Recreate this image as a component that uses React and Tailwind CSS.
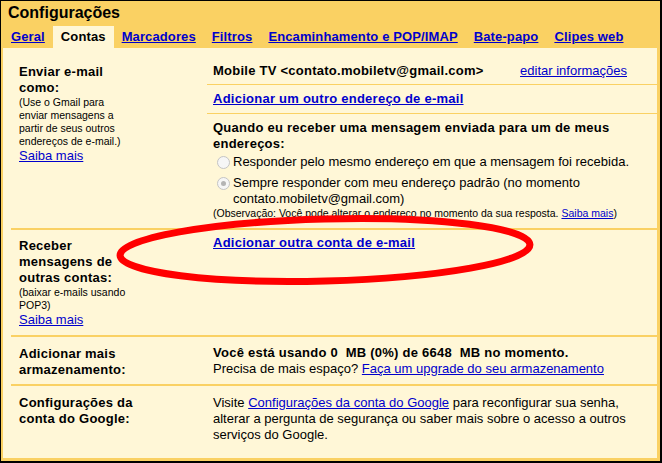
import React from "react";

const LINK = "text-[#0000cc] underline";
const BOLD = "font-bold tracking-[0.25px]";
const SMALL = "text-[10.5px] leading-[13px]";

const TABS = [
  { name: "Geral" },
  { name: "Contas", active: true },
  { name: "Marcadores" },
  { name: "Filtros" },
  { name: "Encaminhamento e POP/IMAP" },
  { name: "Bate-papo" },
  { name: "Clipes web" },
];

function Radio({ checked }) {
  return (
    <span className="mt-[2px] mr-[3px] flex h-[13px] w-[13px] shrink-0 items-center justify-center rounded-full border border-[#c4c4c4] bg-[#f6f6f6]">
      {checked && <span className="h-[5px] w-[5px] rounded-full bg-[#b4b4b4]"></span>}
    </span>
  );
}

export default function App() {
  return (
    <div className="relative h-[463px] w-[662px] bg-black pb-[2px] pl-px pr-[2px] pt-px font-[Liberation_Sans,Arial,sans-serif] text-[13px] leading-4 text-black">
      <div className="flex h-full flex-col bg-[#fad163] pb-[3px] pl-[2px] pr-[3px]">
        <div className="pl-[5px] pt-[2px] text-[16px] font-bold leading-5">Configurações</div>

        <div className="mt-[3px] flex h-[22px] font-bold leading-[22px] tracking-[0.12px]">
          {TABS.map((tab) => (
            <span
              key={tab.name}
              className={tab.active ? "bg-[#fff7d7] px-2" : `px-2 ${LINK}`}
            >
              {tab.name}
            </span>
          ))}
        </div>

        <div className="flex-1 bg-[#fff7d7] pl-2 pt-2">
          {/* Enviar e-mail como */}
          <div className="flex border-b-2 border-[#fad163]">
            <div className="w-[196px] shrink-0 pl-2 pt-2">
              <div className={BOLD}>
                Enviar e-mail
                <br />
                como:
              </div>
              <div className={SMALL}>
                (Use o Gmail para
                <br />
                enviar mensagens a
                <br />
                partir de seus outros
                <br />
                endereços de e-mail.)
              </div>
              <a className={LINK}>Saiba mais</a>
            </div>
            <div className="flex-1">
              <div className="flex justify-between border-b border-[#fad163] pb-[5px] pl-[6px] pr-[30px] pt-[7px]">
                <span className={BOLD}>Mobile TV &lt;contato.mobiletv@gmail.com&gt;</span>
                <a className={LINK}>editar informações</a>
              </div>
              <div className="border-b border-[#fad163] pb-[6px] pl-[6px] pt-[6px]">
                <a className={`${BOLD} ${LINK}`}>Adicionar um outro endereço de e-mail</a>
              </div>
              <div className="pb-2 pl-[6px] pr-3 pt-[6px]">
                <div className={BOLD}>
                  Quando eu receber uma mensagem enviada para um de meus endereços:
                </div>
                <div className="mt-[2px] flex flex-col gap-[5px] pl-1">
                  <div className="flex items-start">
                    <Radio />
                    <span>Responder pelo mesmo endereço em que a mensagem foi recebida.</span>
                  </div>
                  <div className="flex items-start">
                    <Radio checked />
                    <span>
                      Sempre responder com meu endereço padrão (no momento
                      <br />
                      contato.mobiletv@gmail.com)
                    </span>
                  </div>
                </div>
                <div className={SMALL}>
                  (Observação: Você pode alterar o endereço no momento da sua resposta.{" "}
                  <a className={LINK}>Saiba mais</a>)
                </div>
              </div>
            </div>
          </div>

          {/* Receber mensagens */}
          <div className="flex border-b-2 border-[#fad163]">
            <div className="w-[196px] shrink-0 pb-[7px] pl-2 pt-2">
              <div className={BOLD}>
                Receber
                <br />
                mensagens de
                <br />
                outras contas:
              </div>
              <div className={SMALL}>
                (baixar e-mails usando
                <br />
                POP3)
              </div>
              <a className={LINK}>Saiba mais</a>
            </div>
            <div className="flex-1 pl-[6px] pt-[5px]">
              <a className={`${BOLD} ${LINK}`}>Adicionar outra conta de e-mail</a>
            </div>
          </div>

          {/* Armazenamento */}
          <div className="flex border-b-2 border-[#fad163]">
            <div className={`w-[196px] shrink-0 pb-[6px] pl-2 pt-[9px] ${BOLD}`}>
              Adicionar mais
              <br />
              armazenamento:
            </div>
            <div className="flex-1 pl-[6px] pt-2">
              <div className={`whitespace-pre ${BOLD}`}>Você está usando 0  MB (0%) de 6648  MB no momento.</div>
              <div>
                Precisa de mais espaço? <a className={LINK}>Faça um upgrade do seu armazenamento</a>
              </div>
            </div>
          </div>

          {/* Conta do Google */}
          <div className="flex">
            <div className={`w-[196px] shrink-0 pl-2 pt-[9px] ${BOLD}`}>
              Configurações da
              <br />
              conta do Google:
            </div>
            <div className="flex-1 pl-[6px] pr-3 pt-[9px]">
              Visite <a className={LINK}>Configurações da conta do Google</a> para reconfigurar sua senha,
              <br />
              alterar a pergunta de segurança ou saber mais sobre o acesso a outros
              <br />
              serviços do Google.
            </div>
          </div>
        </div>
      </div>

      <svg className="pointer-events-none absolute left-0 top-0" width="662" height="463">
        <ellipse
          cx="325"
          cy="250"
          rx="205"
          ry="31"
          fill="none"
          stroke="#ff0000"
          strokeWidth="7"
          transform="rotate(-1.5 325 250)"
        />
      </svg>
    </div>
  );
}
